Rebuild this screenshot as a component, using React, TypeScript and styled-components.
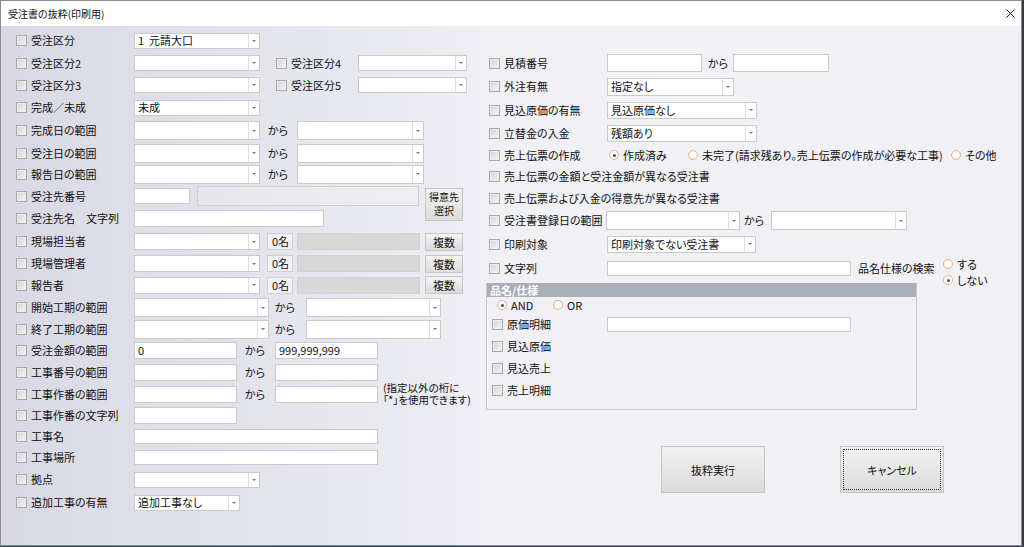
import React, { FC } from 'react';

import styled, { createGlobalStyle, css } from 'styled-components';

const GlobalStyle = createGlobalStyle`
  html,
  body {
    margin: 0;
    padding: 0;
    background: #2e3f4c;
  }

  body {
    font-family: "Noto Sans CJK JP", "Noto Sans", sans-serif;
    font-size: 11px;
    color: #111;
    font-feature-settings: "palt";
  }

  * {
    box-sizing: border-box;
  }
`;

const Window = styled.div`
  width: 1022px;
  height: 546px;
  border: 1px solid #8c8c8c;
  display: flex;
  flex-direction: column;
  background: #f0f0f5;
  overflow: hidden;
`;

const TitleBar = styled.div`
  height: 25px;
  flex: none;
  display: flex;
  align-items: center;
  justify-content: space-between;
  padding: 0 6px 0 7px;
  background: #fff;
  font-size: 10px;
`;

const CloseIcon = styled.svg`
  width: 9px;
  height: 9px;
`;

const Body = styled.div`
  flex: 1;
  display: flex;
  min-height: 0;
`;

const LeftPanel = styled.div`
  width: 479px;
  flex: none;
  display: flex;
  flex-direction: column;
  padding: 3.5px 0 0 15px;
  background: linear-gradient(90deg, #d9d9e5 0%, #e4e4ed 55%, #eeeef4 100%);
  overflow: hidden;
`;

const RightPanel = styled.div`
  flex: 1;
  display: flex;
  flex-direction: column;
  padding: 26px 0 0 9px;
  background: #f0f0f5;
`;

const Row = styled.div<{ $h: number }>`
  height: ${p => p.$h}px;
  flex: none;
  display: flex;
  align-items: center;
`;

const Field = styled.div<{ $w?: number; $ml?: number }>`
  width: ${p => p.$w ?? 118}px;
  margin-left: ${p => p.$ml ?? 0}px;
  flex: none;
  display: flex;
  align-items: center;
  gap: 4px;
  line-height: 13px;
  white-space: pre;
`;

const Check = styled.span`
  width: 11px;
  height: 11px;
  flex: none;
  border: 1px solid #a9a9a9;
  background: linear-gradient(135deg, #d4d4d6, #f4f4f6);
  box-shadow: inset 0 0 0 1px #ececee;
`;

const Box = styled.div<{ $w: number; $h: number }>`
  width: ${p => p.$w}px;
  height: ${p => p.$h}px;
  flex: none;
  display: flex;
  align-items: center;
  padding-left: 3px;
  border: 1px solid #cacaca;
  background: #fff;
  line-height: 1;
  white-space: pre;
  overflow: hidden;
`;

const ComboBox = styled(Box)`
  padding-left: 3px;
`;

const ComboText = styled.span`
  flex: 1;
`;

const ComboArrow = styled.span`
  width: 11px;
  align-self: stretch;
  flex: none;
  display: flex;
  align-items: center;
  justify-content: center;
  border-left: 1px solid #dedede;

  &::after {
    content: '';
    border-left: 2px solid transparent;
    border-right: 2px solid transparent;
    border-top: 2px solid #777;
  }
`;

const ReadOnly = styled.div<{ $w: number; $h: number; $tone: 'pale' | 'gray' | 'count' }>`
  width: ${p => p.$w}px;
  height: ${p => p.$h}px;
  flex: none;
  display: flex;
  align-items: center;
  border: 1px solid #d0d0d4;
  line-height: 1;

  ${p =>
    p.$tone === 'pale' &&
    css`
      background: linear-gradient(90deg, #e6e6ec, #efeff3);
      border-color: #cdcdd2;
    `}

  ${p =>
    p.$tone === 'gray' &&
    css`
      background: #d8d8d8;
      border-color: #d2d2d2;
    `}

  ${p =>
    p.$tone === 'count' &&
    css`
      background: #f1f1f4;
      padding-left: 4px;
    `}
`;

const Gap = styled.span<{ $w: number }>`
  width: ${p => p.$w}px;
  flex: none;
`;

const Kara = styled.span<{ $w: number; $pad: number }>`
  width: ${p => p.$w}px;
  padding-left: ${p => p.$pad}px;
  flex: none;
  line-height: 13px;
`;

const SmallButton = styled.div<{ $w: number; $h: number; $top?: number }>`
  width: ${p => p.$w}px;
  height: ${p => p.$h}px;
  flex: none;
  display: flex;
  flex-direction: column;
  align-items: center;
  justify-content: center;
  text-align: center;
  line-height: 12px;
  border: 1px solid #c6c6c6;
  background: linear-gradient(#f3f3f3, #dcdcdc);
  white-space: nowrap;

  ${p =>
    p.$top !== undefined &&
    css`
      align-self: flex-start;
      margin-top: ${p.$top}px;
    `}
`;

const ButtonLine = styled.span`
  display: block;
  height: 14.5px;
  font-size: 10px;
  line-height: 14.5px;
`;

const Note = styled.div`
  margin-left: 5px;
  flex: none;
  font-size: 10.5px;
  line-height: 12px;
  white-space: pre;
`;

const Option = styled.span<{ $w?: number }>`
  width: ${p => (p.$w ? `${p.$w}px` : 'auto')};
  flex: none;
  display: flex;
  align-items: center;
  gap: 4px;
  line-height: 13px;
  white-space: pre;
`;

const Radio = styled.span<{ $on?: boolean }>`
  position: relative;
  width: 10px;
  height: 10px;
  flex: none;
  border-radius: 50%;
  border: 1px solid #eab184;
  background: radial-gradient(circle, #fff 30%, #fbece0 100%);

  ${p =>
    p.$on &&
    css`
      border-color: #d9b79a;
      background: #fff;

      &::after {
        content: '';
        position: absolute;
        left: 2.5px;
        top: 2.5px;
        width: 3px;
        height: 3px;
        border-radius: 50%;
        background: #3c4a6c;
      }
    `}
`;

const RadioStack = styled.div`
  align-self: flex-start;
  display: flex;
  flex-direction: column;
`;

const StackItem = styled(Option)`
  height: 16px;
`;

const SearchLabel = styled.span`
  width: 85px;
  margin-left: 7px;
  flex: none;
  line-height: 13px;
`;

const GroupBox = styled.div`
  width: 431px;
  margin: 3px 0 0 -3px;
  padding-bottom: 8px;
  border: 1px solid #c8c8cc;
  border-top: none;
`;

const GroupHeader = styled.div`
  height: 14px;
  padding-left: 3px;
  background: #a8afb7;
  color: #fff;
  font-weight: bold;
  line-height: 14px;
`;

const GroupRow = styled.div<{ $h: number; $pad: number }>`
  height: ${p => p.$h}px;
  padding-left: ${p => p.$pad}px;
  display: flex;
  align-items: center;
`;

const ActionRow = styled.div`
  margin-top: 36px;
  padding-left: 172px;
  display: flex;
  gap: 75px;
`;

const ActionButton = styled.div<{ $focused?: boolean }>`
  position: relative;
  width: 104px;
  height: 47px;
  display: flex;
  align-items: center;
  justify-content: center;
  border: 1px solid #c4c4c4;
  background: linear-gradient(#f2f2f2, #dbdbdb);

  ${p =>
    p.$focused &&
    css`
      &::after {
        content: '';
        position: absolute;
        inset: 2px;
        border: 1px dotted #333;
      }
    `}
`;

interface IComboProps {
  w: number;
  h?: number;
  value?: string;
}

const Combo: FC<IComboProps> = ({ w, h = 16, value }) => (
  <ComboBox $w={w} $h={h}>
    <ComboText>{value}</ComboText>
    <ComboArrow />
  </ComboBox>
);

const Label: FC<{ text: string; w?: number; ml?: number }> = ({ text, w, ml }) => (
  <Field $w={w} $ml={ml}>
    <Check />
    {text}
  </Field>
);

const leftH = [
  22.5, 22.5, 21.5, 23, 23.25, 21.5, 21, 22.5, 23.25, 22.25, 21.5, 22.25, 22.25, 21, 21.5, 22, 22,
  21.25, 20.5, 21.25, 22.75, 23,
];

const rightH = [22.5, 24, 23.5, 22.5, 21.5, 21, 22, 23, 24, 24];

const App: FC = () => {
  return (
    <>
      <GlobalStyle />
      <Window>
        <TitleBar>
          <span>受注書の抜粋(印刷用)</span>
          <CloseIcon viewBox="0 0 9 9">
            <path d="M0.5 0.5 L8.5 8.5 M8.5 0.5 L0.5 8.5" stroke="#111" strokeWidth="1" />
          </CloseIcon>
        </TitleBar>
        <Body>
          <LeftPanel>
            <Row $h={leftH[0]}>
              <Label text="受注区分" />
              <Combo w={126} value="1  元請大口" />
            </Row>
            <Row $h={leftH[1]}>
              <Label text="受注区分2" />
              <Combo w={126} />
              <Label text="受注区分4" w={82} ml={16} />
              <Combo w={109} />
            </Row>
            <Row $h={leftH[2]}>
              <Label text="受注区分3" />
              <Combo w={126} />
              <Label text="受注区分5" w={82} ml={16} />
              <Combo w={109} />
            </Row>
            <Row $h={leftH[3]}>
              <Label text="完成／未成" />
              <Combo w={126} value="未成" />
            </Row>
            {['完成日の範囲', '受注日の範囲', '報告日の範囲'].map((t, i) => (
              <Row key={t} $h={leftH[4 + i]}>
                <Label text={t} />
                <Combo w={126} h={19} />
                <Kara $w={37} $pad={8}>
                  から
                </Kara>
                <Combo w={127} h={19} />
              </Row>
            ))}
            <Row $h={leftH[7]}>
              <Label text="受注先番号" />
              <Box $w={56} $h={16} />
              <Gap $w={7} />
              <ReadOnly $w={222} $h={20} $tone="pale" />
              <Gap $w={6} />
              <SmallButton $w={38} $h={33} $top={3}>
                <ButtonLine>得意先</ButtonLine>
                <ButtonLine>選択</ButtonLine>
              </SmallButton>
            </Row>
            <Row $h={leftH[8]}>
              <Label text="受注先名　文字列" />
              <Box $w={190} $h={17} />
            </Row>
            {['現場担当者', '現場管理者', '報告者'].map((t, i) => (
              <Row key={t} $h={leftH[9 + i]}>
                <Label text={t} />
                <Combo w={126} h={17} />
                <Gap $w={7} />
                <ReadOnly $w={26} $h={17} $tone="count">
                  0名
                </ReadOnly>
                <Gap $w={4} />
                <ReadOnly $w={123} $h={17} $tone="gray" />
                <Gap $w={5} />
                <SmallButton $w={38} $h={18}>
                  複数
                </SmallButton>
              </Row>
            ))}
            {['開始工期の範囲', '終了工期の範囲'].map((t, i) => (
              <Row key={t} $h={leftH[12 + i]}>
                <Label text={t} />
                <Combo w={135} h={19} />
                <Kara $w={37} $pad={6}>
                  から
                </Kara>
                <Combo w={135} h={19} />
              </Row>
            ))}
            <Row $h={leftH[14]}>
              <Label text="受注金額の範囲" />
              <Box $w={103} $h={17}>
                0
              </Box>
              <Kara $w={38} $pad={8}>
                から
              </Kara>
              <Box $w={103} $h={17}>
                999,999,999
              </Box>
            </Row>
            <Row $h={leftH[15]}>
              <Label text="工事番号の範囲" />
              <Box $w={103} $h={17} />
              <Kara $w={38} $pad={8}>
                から
              </Kara>
              <Box $w={103} $h={17} />
            </Row>
            <Row $h={leftH[16]}>
              <Label text="工事作番の範囲" />
              <Box $w={103} $h={17} />
              <Kara $w={38} $pad={8}>
                から
              </Kara>
              <Box $w={103} $h={17} />
              <Note>{'(指定以外の桁に\n「*」を使用できます)'}</Note>
            </Row>
            <Row $h={leftH[17]}>
              <Label text="工事作番の文字列" />
              <Box $w={103} $h={17} />
            </Row>
            <Row $h={leftH[18]}>
              <Label text="工事名" />
              <Box $w={244} $h={15} />
            </Row>
            <Row $h={leftH[19]}>
              <Label text="工事場所" />
              <Box $w={244} $h={15} />
            </Row>
            <Row $h={leftH[20]}>
              <Label text="拠点" />
              <Combo w={126} />
            </Row>
            <Row $h={leftH[21]}>
              <Label text="追加工事の有無" />
              <Combo w={106} value="追加工事なし" />
            </Row>
          </LeftPanel>

          <RightPanel>
            <Row $h={rightH[0]}>
              <Label text="見積番号" />
              <Box $w={95} $h={18} />
              <Kara $w={31} $pad={6}>
                から
              </Kara>
              <Box $w={96} $h={18} />
            </Row>
            <Row $h={rightH[1]}>
              <Label text="外注有無" />
              <Combo w={127} h={18} value="指定なし" />
            </Row>
            <Row $h={rightH[2]}>
              <Label text="見込原価の有無" />
              <Combo w={150} h={17} value="見込原価なし" />
            </Row>
            <Row $h={rightH[3]}>
              <Label text="立替金の入金" />
              <Combo w={150} h={17} value="残額あり" />
            </Row>
            <Row $h={rightH[4]}>
              <Label text="売上伝票の作成" />
              <Gap $w={2} />
              <Option $w={79}>
                <Radio $on />
                作成済み
              </Option>
              <Option $w={263}>
                <Radio />
                未完了(請求残あり。売上伝票の作成が必要な工事)
              </Option>
              <Option>
                <Radio />
                その他
              </Option>
            </Row>
            <Row $h={rightH[5]}>
              <Label text="売上伝票の金額と受注金額が異なる受注書" w={400} />
            </Row>
            <Row $h={rightH[6]}>
              <Label text="売上伝票および入金の得意先が異なる受注書" w={400} />
            </Row>
            <Row $h={rightH[7]}>
              <Label text="受注書登録日の範囲" w={117} />
              <Combo w={134} h={19} />
              <Kara $w={31} $pad={4}>
                から
              </Kara>
              <Combo w={136} h={19} />
            </Row>
            <Row $h={rightH[8]}>
              <Label text="印刷対象" />
              <Combo w={149} h={17} value="印刷対象でない受注書" />
            </Row>
            <Row $h={rightH[9]}>
              <Label text="文字列" />
              <Box $w={244} $h={15} />
              <SearchLabel>品名仕様の検索</SearchLabel>
              <RadioStack>
                <StackItem>
                  <Radio />
                  する
                </StackItem>
                <StackItem>
                  <Radio $on />
                  しない
                </StackItem>
              </RadioStack>
            </Row>

            <GroupBox>
              <GroupHeader>品名/仕様</GroupHeader>
              <GroupRow $h={16} $pad={10}>
                <Option $w={56}>
                  <Radio $on />
                  AND
                </Option>
                <Option>
                  <Radio />
                  OR
                </Option>
              </GroupRow>
              <GroupRow $h={22} $pad={5}>
                <Label text="原価明細" w={115} />
                <Box $w={244} $h={15} />
              </GroupRow>
              <GroupRow $h={22} $pad={5}>
                <Label text="見込原価" w={115} />
              </GroupRow>
              <GroupRow $h={22} $pad={5}>
                <Label text="見込売上" w={115} />
              </GroupRow>
              <GroupRow $h={22} $pad={5}>
                <Label text="売上明細" w={115} />
              </GroupRow>
            </GroupBox>

            <ActionRow>
              <ActionButton>抜粋実行</ActionButton>
              <ActionButton $focused>キャンセル</ActionButton>
            </ActionRow>
          </RightPanel>
        </Body>
      </Window>
    </>
  );
};

export default App;
